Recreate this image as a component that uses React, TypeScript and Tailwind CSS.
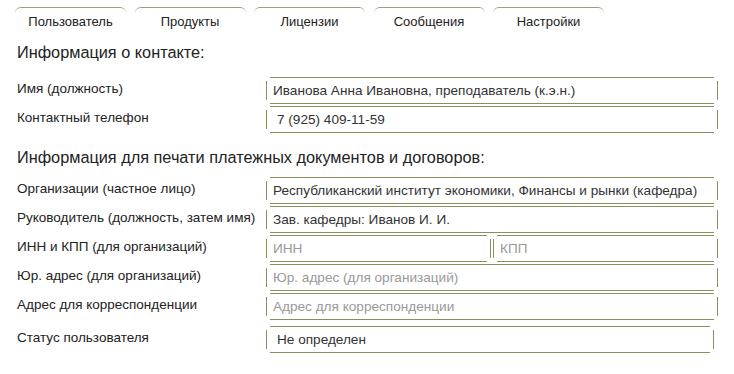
import React from "react";

const tabs = ["Пользователь", "Продукты", "Лицензии", "Сообщения", "Настройки"];

type FieldProps = {
  value?: string;
  placeholder?: string;
  padClass?: string;
  className?: string;
};

function Field({ value, placeholder, padClass = "pl-[6px]", className = "" }: FieldProps) {
  return (
    <div className={`mx-[4px] border-y border-[#8b8f5e] ${className}`}>
      <div className="-mx-[4px] my-[3px] flex h-[19px] items-center border-x border-[#8b8f5e]">
        <input
          readOnly
          defaultValue={value}
          placeholder={placeholder}
          className={`w-full bg-transparent text-[13.6px] leading-[19px] text-[#333] outline-none placeholder:text-[#999] ${padClass}`}
        />
      </div>
    </div>
  );
}

function Row({ label, children, className = "" }: { label: string; children: React.ReactNode; className?: string }) {
  return (
    <div className={`flex items-center ${className}`}>
      <div className="w-[249px] whitespace-nowrap pb-[2px] text-[13.5px] text-[#222]">{label}</div>
      <div className="w-[452px]">{children}</div>
    </div>
  );
}

export default function App() {
  return (
    <div className="min-h-[374px] w-[734px] bg-white font-['Liberation_Sans',Arial,sans-serif]">
      <div className="flex gap-[8.5px] pl-[15px] pt-[7px]">
        {tabs.map((tab) => (
          <div
            key={tab}
            className="h-[35px] w-[111px] rounded-t-[6px] border-t border-[#9c9d84] pt-[6px] text-center text-[13px] leading-[15px] text-[#222]"
          >
            {tab}
          </div>
        ))}
      </div>

      <div className="pl-[17px]">
        <h2 className="h-[20px] text-[16.3px] leading-[20px] text-[#222]">Информация о контакте:</h2>

        <div className="mt-[15px] flex flex-col gap-[2px]">
          <Row label="Имя (должность)">
            <Field value="Иванова Анна Ивановна, преподаватель (к.э.н.)" />
          </Row>
          <Row label="Контактный телефон">
            <Field value="7 (925) 409-11-59" padClass="pl-[10px]" />
          </Row>
        </div>

        <h2 className="mt-[14px] h-[20px] text-[16.3px] leading-[20px] text-[#222]">
          Информация для печати платежных документов и договоров:
        </h2>

        <div className="mt-[10px] flex flex-col gap-[2px]">
          <Row label="Организации (частное лицо)">
            <Field value="Республиканский институт экономики, Финансы и рынки (кафедра)" />
          </Row>
          <Row label="Руководитель (должность, затем имя)">
            <Field value="Зав. кафедры: Иванов И. И." />
          </Row>
          <Row label="ИНН и КПП (для организаций)">
            <div className="flex gap-[2px]">
              <div className="w-[225px]">
                <Field placeholder="ИНН" />
              </div>
              <div className="w-[225px]">
                <Field placeholder="КПП" />
              </div>
            </div>
          </Row>
          <Row label="Юр. адрес (для организаций)">
            <Field placeholder="Юр. адрес (для организаций)" />
          </Row>
          <Row label="Адрес для корреспонденции">
            <Field placeholder="Адрес для корреспонденции" />
          </Row>
          <Row label="Статус пользователя" className="mt-[4px]">
            <div className="w-[448px]">
              <Field value="Не определен" padClass="pl-[10px]" />
            </div>
          </Row>
        </div>
      </div>
    </div>
  );
}
